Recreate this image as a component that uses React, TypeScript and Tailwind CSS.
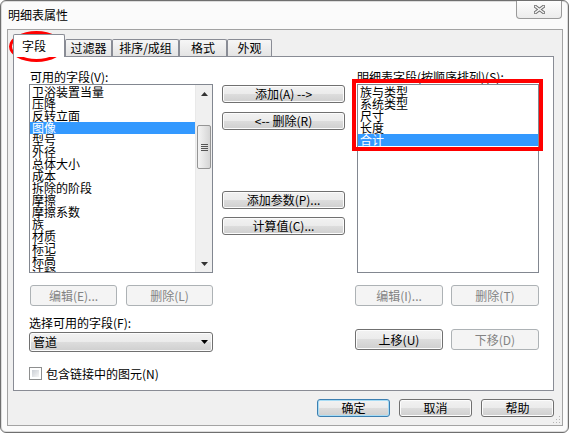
import React from 'react';

const availableFields = [
    '卫浴装置当量', '压降', '反转立面', '图像', '型号', '外径', '总体大小', '成本',
    '拆除的阶段', '摩擦', '摩擦系数', '族', '材质', '标记', '标高', '注释',
];

const scheduledFields = ['族与类型', '系统类型', '尺寸', '长度', '合计'];

interface ButtonProps {
    label: string;
    className?: string;
    disabled?: boolean;
    isDefault?: boolean;
}

const Button: React.FC<ButtonProps> = ({ label, className = '', disabled = false, isDefault = false }) => {
    const look = disabled
        ? 'border-[#adb2b5] bg-[#f4f4f4] text-[#838383]'
        : isDefault
            ? 'border-[#3c7fb1] bg-[linear-gradient(#f2f2f2_0%,#ebebeb_50%,#dddddd_50%,#cfcfcf_100%)] shadow-[inset_0_0_0_1px_#a7dcf5] text-black'
            : 'border-[#707070] bg-[linear-gradient(#f2f2f2_0%,#ebebeb_50%,#dddddd_50%,#cfcfcf_100%)] shadow-[inset_0_0_0_1px_#fcfcfc] text-black';
    return (
        <div className={`flex items-center justify-center rounded-[3px] border text-[12px] leading-[12px] whitespace-pre ${look} ${className}`}>
            {label}
        </div>
    );
};

const Arrow: React.FC<{ down?: boolean }> = ({ down = false }) => (
    <svg width="7" height="4" viewBox="0 0 7 4">
        <path d={down ? 'M0 0H7L3.5 4Z' : 'M0 4H7L3.5 0Z'} fill="#333" />
    </svg>
);

const ScrollBar: React.FC = () => (
    <div className="flex w-[17px] flex-col bg-[#f0f0f0] border-l border-[#e9e9e9]">
        <div className="flex h-[17px] items-center justify-center">
            <Arrow />
        </div>
        <div className="flex-1 pt-[23px]">
            <div className="mx-px flex h-[44px] flex-col items-center justify-center gap-[1px] rounded-[2px] border border-[#959595] bg-[linear-gradient(90deg,#f4f4f4,#e5e5e5_50%,#d5d5d5)]">
                <div className="h-px w-[7px] bg-[#555]" />
                <div className="h-px w-[7px] bg-[#555]" />
                <div className="h-px w-[7px] bg-[#555]" />
                <div className="h-px w-[7px] bg-[#555]" />
            </div>
        </div>
        <div className="flex h-[17px] items-center justify-center">
            <Arrow down />
        </div>
    </div>
);

const FieldRow: React.FC<{ name: string; selected: boolean }> = ({ name, selected }) => (
    <div className={`h-[12px] pl-[2px] text-[12px] leading-[12px] whitespace-nowrap ${selected ? 'bg-[#3399ff] text-white' : 'text-black'}`}>
        {name}
    </div>
);

const CloseGlyph: React.FC = () => (
    <svg width="11" height="9" viewBox="0 0 11 9">
        <path d="M1.5 1.5L9.5 7.5M9.5 1.5L1.5 7.5" stroke="#6e6e6e" strokeWidth="3.4" strokeLinecap="square" />
        <path d="M1.5 1.5L9.5 7.5M9.5 1.5L1.5 7.5" stroke="#f4f4f4" strokeWidth="1.4" strokeLinecap="square" />
    </svg>
);

export default function App() {
    return (
        <div className="relative h-[433px] w-[569px] bg-white font-['Noto_Sans_CJK_SC',sans-serif] text-[12px] text-black">
            <div className="flex h-full w-full flex-col rounded-[6px] border border-[#6f6f6f] bg-[#fbfbfb] shadow-[inset_0_0_0_1px_#dcdcdc]">
                {/* title bar */}
                <div className="flex h-[28px] items-start justify-between">
                    <div className="pl-[7px] pt-[7px] text-[12px] leading-[14px]">明细表属性</div>
                    <div className="mr-[6px] flex h-[18px] w-[46px] items-center justify-center rounded-b-[4px] border border-t-0 border-[#9a9a9a] bg-[linear-gradient(#fdfdfd,#ececec)]">
                        <CloseGlyph />
                    </div>
                </div>

                {/* client area */}
                <div className="relative ml-[6px] h-[397px] w-[556px] border border-[#a3a3a3] bg-[#f0f0f0] pt-[4px]">
                    {/* tabs */}
                    <div className="flex h-[22px] items-end pl-[5px]">
                        <div className="relative z-10 -mb-px flex h-[23px] w-[52px] items-center rounded-t-[2px] border border-b-0 border-[#898c95] bg-white pl-[8px] leading-[12px]">
                            字段
                        </div>
                        <div className="flex h-[17px] w-[47px] items-center justify-center rounded-t-[2px] border border-b-0 border-[#898c95] bg-[linear-gradient(#f6f6f6,#e4e4e4)] leading-[12px]">
                            过滤器
                        </div>
                        <div className="flex h-[17px] w-[67px] items-center justify-center rounded-t-[2px] border border-b-0 border-[#898c95] bg-[linear-gradient(#f6f6f6,#e4e4e4)] leading-[12px]">
                            排序/成组
                        </div>
                        <div className="flex h-[17px] w-[48px] items-center justify-center rounded-t-[2px] border border-b-0 border-[#898c95] bg-[linear-gradient(#f6f6f6,#e4e4e4)] leading-[12px]">
                            格式
                        </div>
                        <div className="flex h-[17px] w-[45px] items-center justify-center rounded-t-[2px] border border-b-0 border-[#898c95] bg-[linear-gradient(#f6f6f6,#e4e4e4)] leading-[12px]">
                            外观
                        </div>
                    </div>

                    {/* tab panel */}
                    <div className="ml-[5px] flex h-[335px] w-[541px] border border-[#898c95] bg-white pl-[15px]">
                        {/* available fields */}
                        <div className="flex w-[184px] flex-col pt-[13px]">
                            <div className="h-[14px] pl-px leading-[14px]">可用的字段(V):</div>
                            <div className="flex h-[189px] border border-[#828790] bg-white">
                                <div className="flex-1 overflow-hidden pt-px">
                                    {availableFields.map(f => (
                                        <FieldRow key={f} name={f} selected={f === '图像'} />
                                    ))}
                                </div>
                                <ScrollBar />
                            </div>
                            <div className="mt-[12px] flex h-[21px] gap-[9px] pl-px">
                                <Button label="编辑(E)..." disabled className="w-[87px]" />
                                <Button label="删除(L)" disabled className="w-[87px]" />
                            </div>
                            <div className="mt-[10px] h-[14px] leading-[14px]">选择可用的字段(F):</div>
                            <div className="mt-[2px] flex h-[20px] items-center justify-between rounded-[3px] border border-[#707070] bg-[linear-gradient(#f2f2f2_0%,#ebebeb_50%,#dddddd_50%,#cfcfcf_100%)] pl-[3px] pr-[4px] shadow-[inset_0_0_0_1px_#fcfcfc]">
                                <span className="leading-[12px]">管道</span>
                                <svg width="7" height="4" viewBox="0 0 7 4">
                                    <path d="M0 0H7L3.5 4Z" fill="#000" />
                                </svg>
                            </div>
                            <div className="mt-[15px] flex h-[13px] items-center gap-[4px]">
                                <div className="h-[13px] w-[13px] border border-[#8e8f8f] bg-white p-[2px]">
                                    <div className="h-full w-full bg-[linear-gradient(135deg,#cbcfd5,#f6f6f6)]" />
                                </div>
                                <span className="leading-[12px]">包含链接中的图元(N)</span>
                            </div>
                        </div>

                        {/* middle buttons */}
                        <div className="ml-[9px] flex w-[123px] flex-col pt-[28px]">
                            <Button label="添加(A) -->" className="h-[18px]" />
                            <Button label="<-- 删除(R)" className="mt-[9px] h-[18px]" />
                            <Button label="添加参数(P)..." className="mt-[61px] h-[18px]" />
                            <Button label="计算值(C)..." className="mt-[8px] h-[18px]" />
                        </div>

                        {/* scheduled fields */}
                        <div className="ml-[10px] flex w-[184px] flex-col pt-[13px]">
                            <div className="h-[14px] pl-[2px] leading-[14px]">明细表字段(按顺序排列)(S):</div>
                            <div className="ml-[2px] h-[189px] w-[182px] overflow-hidden border border-[#828790] bg-white pt-px">
                                {scheduledFields.map(f => (
                                    <FieldRow key={f} name={f} selected={f === '合计'} />
                                ))}
                            </div>
                            <div className="mt-[12px] flex h-[21px] gap-[8px]">
                                <Button label="编辑(I)..." disabled className="w-[88px]" />
                                <Button label="删除(T)" disabled className="w-[88px]" />
                            </div>
                            <div className="mt-[23px] flex h-[21px] gap-[8px]">
                                <Button label="上移(U)" className="w-[88px]" />
                                <Button label="下移(D)" disabled className="w-[88px]" />
                            </div>
                        </div>
                    </div>

                    {/* dialog buttons */}
                    <div className="mt-[8px] flex w-[546px] justify-end gap-[9px]">
                        <Button label="确定" isDefault className="h-[18px] w-[73px]" />
                        <Button label="取消" className="h-[18px] w-[73px]" />
                        <Button label="帮助" className="h-[18px] w-[73px]" />
                    </div>

                    {/* size grip */}
                    <svg className="absolute bottom-[1px] right-[1px]" width="9" height="9" viewBox="0 0 9 9">
                        <rect x="7" y="1" width="1" height="1" fill="#b5b5b5" />
                        <rect x="4" y="4" width="1" height="1" fill="#b5b5b5" />
                        <rect x="7" y="4" width="1" height="1" fill="#b5b5b5" />
                        <rect x="1" y="7" width="1" height="1" fill="#b5b5b5" />
                        <rect x="4" y="7" width="1" height="1" fill="#b5b5b5" />
                        <rect x="7" y="7" width="1" height="1" fill="#b5b5b5" />
                    </svg>
                </div>
            </div>

            {/* red annotation marks */}
            <div className="pointer-events-none absolute left-[9px] top-[31px] h-[31px] w-[55px] rounded-[50%] border-[3px] border-[#ff0000]" />
            <div className="pointer-events-none absolute left-[352px] top-[79px] h-[72px] w-[191px] border-4 border-[#ff0000]" />
        </div>
    );
}
